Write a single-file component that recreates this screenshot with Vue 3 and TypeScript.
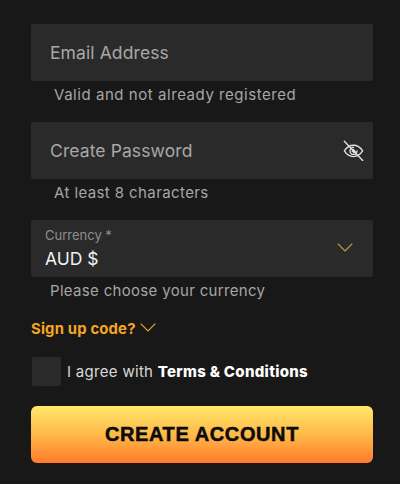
<script setup lang="ts">
const hintEmail = 'Valid and not already registered'
</script>

<template>
  <div class="page">
    <form class="form" @submit.prevent>
      <div class="field"><span class="ph">Email Address</span></div>
      <p class="hint hint-a">{{ hintEmail }}</p>

      <div class="field field-pw">
        <span class="ph">Create Password</span>
        <svg class="eye" viewBox="0 0 24 24" width="21" height="21" fill="none" stroke="#e4e4e4" stroke-width="1.500" stroke-linecap="round" stroke-linejoin="round">
          <path d="M1.500 12.500C4.500 8 8 6 12 6s7.500 2 10.500 6.500C19.500 17 16 19 12 19s-7.500-2-10.500-6.500z" />
          <path d="M16 12.500a4 4 0 1 1-4-4" />
          <path d="M9.500 12.500l2.500-2.500 3 3-2.500 2.500z" fill="#e4e4e4" stroke="none" />
          <path d="M1.500 1.500l21 22" />
        </svg>
      </div>
      <p class="hint hint-a hint-short">At least 8 characters</p>

      <div class="field field-select">
        <div class="select-text">
          <span class="label">Currency *</span>
          <span class="value">AUD $</span>
        </div>
        <svg class="chev chev-a" viewBox="0 0 16 9" width="16" height="9" fill="none" stroke="#c9a14a" stroke-width="1.100"><path d="M.7.7 8 8l7.300-7.300" /></svg>
      </div>
      <p class="hint hint-b">Please choose your currency</p>

      <div class="code">
        <span>Sign up code?</span>
        <svg class="chev chev-b" viewBox="0 0 16 9" width="16" height="9" fill="none" stroke="#f5a623" stroke-width="1.100"><path d="M.7.7 8 8l7.300-7.300" /></svg>
      </div>

      <label class="agree">
        <span class="box"></span>
        <span>I agree with <b>Terms &amp; Conditions</b></span>
      </label>

      <button class="cta" type="submit">CREATE ACCOUNT</button>
    </form>
  </div>
</template>

<style>
html, body { margin: 0; background: #181818; }
</style>

<style scoped>
.page {
  width: 400px;
  height: 484px;
  box-sizing: border-box;
  padding: 24px 27px 0 31px;
  background: #181818;
  font-family: "Inter", "Open Sans", sans-serif;
  overflow: hidden;
}
.form { display: flex; flex-direction: column; }
.field {
  height: 57px;
  box-sizing: border-box;
  background: #2a2a2a;
  border-radius: 2px;
  display: flex;
  align-items: center;
  justify-content: space-between;
  padding: 0 9px 0 19px;
}
.ph { font-size: 17.500px; color: #a8a8a8; letter-spacing: .1px; }
.hint {
  margin: 0;
  height: 41px;
  box-sizing: border-box;
  padding-top: 5px;
  font-size: 15px;
  line-height: 18px;
  letter-spacing: .55px;
  color: #a6a6a6;
}
.hint-a { padding-left: 23px; }
.hint-short { letter-spacing: .4px; }
.hint-b { padding-left: 19px; height: 38px; letter-spacing: .32px; }
.field-select { padding: 0 20px 0 14px; }
.select-text { display: flex; flex-direction: column; gap: 4px; padding-top: 1px; }
.label { font-size: 13px; line-height: 16px; color: #8e8e8e; }
.value { font-size: 17.500px; line-height: 24px; color: #f2f2f2; }
.eye { display: block; }
.chev { display: block; }
.chev-a { margin-top: -2px; }
.chev-b { margin-top: -4px; }
.code {
  display: flex;
  align-items: center;
  gap: 4px;
  height: 26px;
  margin-top: 1px;
  font-size: 14.800px;
  font-weight: 700;
  color: #f5a623;
  letter-spacing: .2px;
}
.agree {
  display: flex;
  align-items: center;
  gap: 6px;
  margin: 15px 0 0 1px;
  font-size: 15px;
  color: #d8d8d8;
  letter-spacing: .3px;
}
.agree b { color: #fff; font-weight: 800; }
.box { width: 29px; height: 29px; background: #2a2a2a; border-radius: 2px; }
.cta {
  margin-top: 20px;
  height: 57px;
  border: 0;
  border-radius: 6px;
  background: linear-gradient(180deg, #ffe96a 0%, #ffb347 55%, #ff7a2b 100%);
  color: #0b0b0b;
  font-family: "Liberation Sans", Arial, sans-serif;
  font-size: 20px;
  font-weight: 700;
  letter-spacing: .6px;
  -webkit-text-stroke: .5px #0b0b0b;
  padding: 0;
}
</style>
